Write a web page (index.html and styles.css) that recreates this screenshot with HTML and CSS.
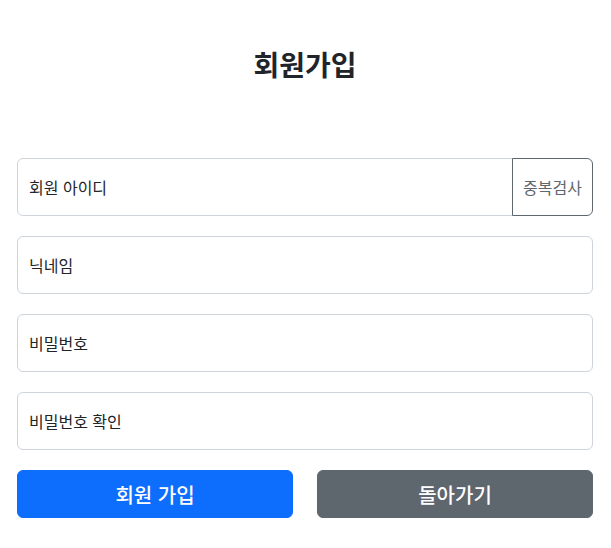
FILE: index.html
```html
<!DOCTYPE html>
<html lang="ko">
<head>
<meta charset="utf-8">
<title>회원가입</title>
<link rel="stylesheet" href="styles.css">
</head>
<body>
<main class="page">
  <h2 class="title">회원가입</h2>
  <form class="form">
    <div class="input-group">
      <input class="field field-grouped" type="text" placeholder="회원 아이디">
      <button type="button" class="btn-check">중복검사</button>
    </div>
    <input class="field" type="text" placeholder="닉네임">
    <input class="field" type="password" placeholder="비밀번호">
    <input class="field" type="password" placeholder="비밀번호 확인">
    <div class="actions">
      <button type="submit" class="btn btn-primary">회원 가입</button>
      <button type="button" class="btn btn-secondary">돌아가기</button>
    </div>
  </form>
</main>
</body>
</html>
```

FILE: styles.css
```css
* { box-sizing: border-box; }
html, body { margin: 0; padding: 0; background: #fff; }
body {
  font-family: "Noto Sans CJK KR", "Noto Sans", sans-serif;
  color: #212529;
}
.page {
  width: 576px;
  margin-left: 17px;
  padding-top: 47px;
}
.title {
  margin: 0 0 77px;
  font-size: 28px;
  line-height: 34px;
  font-weight: 700;
  text-align: center;
  color: #212529;
}
.form {
  display: flex;
  flex-direction: column;
  gap: 20px;
}
.input-group {
  display: flex;
}
.field {
  height: 58px;
  width: 100%;
  padding: 0 11px 1px;
  border: 1px solid #ced4da;
  border-radius: 6px;
  font-family: inherit;
  font-size: 16px;
  color: #212529;
  background: #fff;
  outline: none;
}
.field::placeholder { color: #212529; opacity: 1; }
.field-grouped {
  flex: 1;
  min-width: 0;
  border-top-right-radius: 0;
  border-bottom-right-radius: 0;
}
.btn-check {
  flex: 0 0 81px;
  margin-left: -1px;
  padding: 0 0 1px;
  border: 1px solid #5e666e;
  border-radius: 0 6px 6px 0;
  background: #fff;
  color: #5e666e;
  font-family: inherit;
  font-size: 16px;
  text-align: center;
  position: relative;
}
.actions {
  display: grid;
  grid-template-columns: 1fr 1fr;
  gap: 24px;
}
.btn {
  height: 48px;
  border: 1px solid transparent;
  border-radius: 6px;
  font-family: inherit;
  font-size: 20px;
  font-weight: 500;
  color: #fff;
}
.btn-primary { background: #0d6efd; border-color: #0d6efd; }
.btn-secondary { background: #5e666e; border-color: #5e666e; }
```
